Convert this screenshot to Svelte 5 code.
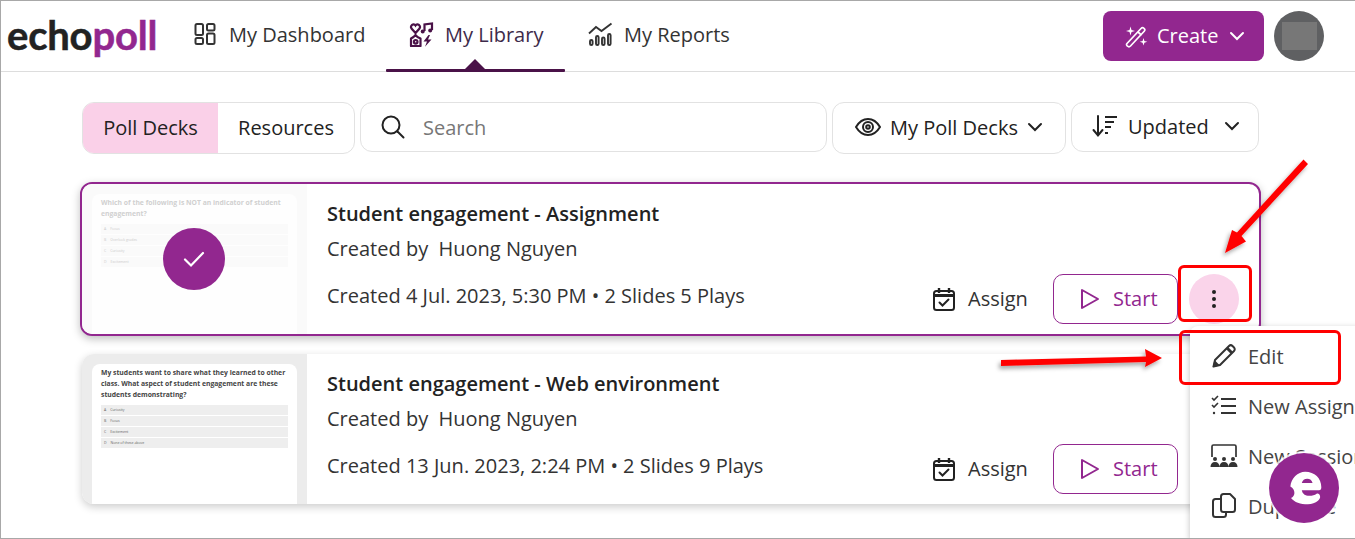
<script>
  const cards = [
    {
      title: "Student engagement - Assignment",
      meta: "Created 4 Jul. 2023, 5:30 PM • 2 Slides 5 Plays",
      question: "Which of the following is NOT an indicator of student engagement?",
      options: ["Focus", "Overlook grades", "Curiosity", "Excitement"],
      selected: true
    },
    {
      title: "Student engagement - Web environment",
      meta: "Created 13 Jun. 2023, 2:24 PM • 2 Slides 9 Plays",
      question: "My students want to share what they learned to other class. What aspect of student engagement are these students demonstrating?",
      options: ["Curiosity", "Focus", "Excitement", "None of these above"],
      selected: false
    }
  ];
  const letters = ["A", "B", "C", "D"];
</script>

<div class="frame">
  <header class="topbar">
    <div class="logo"><span>echo</span><span class="poll">poll</span></div>
    <nav class="nav">
      <a class="nav-item dash">
        <svg width="24" height="24" viewBox="0 0 24 24" fill="none" stroke="currentColor" stroke-width="2"><rect x="2.5" y="2" width="7.5" height="11" rx="1.5"/><rect x="14" y="2" width="7.5" height="6.5" rx="1.5"/><rect x="2.5" y="16" width="7.5" height="6" rx="1.5"/><rect x="14" y="11.5" width="7.5" height="10.5" rx="1.5"/></svg>
        My Dashboard
      </a>
      <a class="nav-item lib active">
        <svg width="25" height="25" viewBox="0 0 25 25" fill="none" stroke="#4a1248" stroke-width="2.2"><path d="M6.500 11 2.500 6.500C.8 4 4.500 .5 6.500 3.500 8.500 .5 12.200 4 10.500 6.500z"/><path d="M15.500 9V2.500l7.500-1V8"/><circle cx="13.700" cy="9.500" r="2" fill="#4a1248" stroke="none"/><circle cx="21.200" cy="8.500" r="2" fill="#4a1248" stroke="none"/><path d="M2 16.500 4.500 15l2-2 2 2 3 1.500V24H2z" stroke-linejoin="round"/><circle cx="6.700" cy="19.800" r="1.800"/><path d="M19.500 13 14.500 19.500h3.500L16 24.800 22.500 17.500H19l2-4.500z" fill="#4a1248" stroke="none"/></svg>
        My Library
        <span class="caret"></span>
      </a>
      <a class="nav-item rep">
        <svg width="25" height="24" viewBox="0 0 25 24" fill="none" stroke="currentColor" stroke-width="1.900"><path d="M1 11.500 8 5l5.500 4L23.500 1.500"/><rect x="2" y="18" width="2.600" height="5" rx="1.300"/><rect x="8" y="14" width="2.600" height="9" rx="1.300"/><rect x="14" y="15.500" width="2.600" height="7.500" rx="1.300"/><rect x="20" y="12" width="2.600" height="11" rx="1.300"/></svg>
        My Reports
      </a>
    </nav>
    <button class="create">
      <svg width="24" height="24" viewBox="0 0 24 24" fill="none" stroke="#fff" stroke-width="1.700"><path d="M3 19.500 17 4.500c1-1 2-1 3-.2s1 2 .2 3L6.500 22c-1 1-2 1-3 .2s-1.300-1.700-.5-2.700z"/><path d="m14 8 3.500 3.200"/><path d="M6.500 2.500 7.500 6 11 7 7.500 8 6.500 11.500 5.500 8 2 7 5.500 6z" fill="#fff" stroke="none"/><path d="M19.500 14l.9 2.900 2.900.9-2.900.9-.9 2.900-.9-2.900-2.900-.9 2.900-.9z" fill="#fff" stroke="none"/></svg>
      Create
      <svg class="chev" width="16" height="10" viewBox="0 0 16 10" fill="none" stroke="#fff" stroke-width="2" stroke-linecap="round"><path d="m2 2 6 6 6-6"/></svg>
    </button>
    <div class="avatar"><span></span></div>
  </header>

  <main class="content">
    <div class="toolbar">
      <div class="tabs">
        <span class="tab on">Poll Decks</span>
        <span class="tab">Resources</span>
      </div>
      <div class="search">
        <svg width="26" height="26" viewBox="0 0 26 26" fill="none" stroke="#222" stroke-width="2"><circle cx="11" cy="11" r="8.500"/><path d="m17.500 17.500 6 6" stroke-linecap="round"/></svg>
        <span>Search</span>
      </div>
      <button class="filter decks">
        <svg width="26" height="20" viewBox="0 0 26 20" fill="none" stroke="#222" stroke-width="2"><path d="M1 10c3-5 7-8 12-8s9 3 12 8c-3 5-7 8-12 8S4 15 1 10z"/><circle cx="13" cy="10" r="5"/><circle cx="13" cy="10" r="1.800"/></svg>
        My Poll Decks
        <svg width="16" height="10" viewBox="0 0 16 10" fill="none" stroke="#222" stroke-width="2" stroke-linecap="round"><path d="m2 2 6 6 6-6"/></svg>
      </button>
      <button class="filter sort">
        <svg width="26" height="24" viewBox="0 0 26 24" fill="none" stroke="#222" stroke-width="2"><path d="M6 2v19M1.500 16 6 21.500 10.500 16" stroke-linecap="round"/><path d="M13 3h12M13 8h9M13 13h6M13 19h3"/></svg>
        Updated
        <svg width="16" height="10" viewBox="0 0 16 10" fill="none" stroke="#222" stroke-width="2" stroke-linecap="round"><path d="m2 2 6 6 6-6"/></svg>
      </button>
    </div>

    <div class="cards">
      {#each cards as card}
        <article class="card" class:selected={card.selected}>
          <div class="thumb">
            <div class="slide">
              <p class="q">{card.question}</p>
              {#each card.options as opt, i}
                <div class="opt"><b>{letters[i]}</b>{opt}</div>
              {/each}
            </div>
            {#if card.selected}
              <div class="check">
                <svg width="22" height="18" viewBox="0 0 22 18" fill="none" stroke="#fff" stroke-width="2.200" stroke-linecap="round"><path d="m2 9.500 6 6L20 3"/></svg>
              </div>
            {/if}
          </div>
          <div class="info">
            <h3>{card.title}</h3>
            <p class="by">Created by&nbsp; Huong Nguyen</p>
            <div class="bottom">
              <p class="meta">{card.meta}</p>
              <span class="assign">
                <svg width="22" height="24" viewBox="0 0 22 24" fill="none" stroke="#222" stroke-width="2"><rect x="1" y="4" width="20" height="19" rx="2.500"/><path d="M1 8.500h20" stroke-width="3"/><path d="M6 1v5M16 1v5" stroke-width="2.400"/><path d="m6.500 15.500 3 3 6-6" stroke-linecap="round"/></svg>
                Assign
              </span>
              <button class="start">
                <svg width="20" height="22" viewBox="0 0 20 22" fill="none" stroke="#92278f" stroke-width="2" stroke-linejoin="round"><path d="M2 2v18l16-9z"/></svg>
                Start
              </button>
              {#if card.selected}
                <span class="more"><i></i><i></i><i></i></span>
              {/if}
            </div>
          </div>
        </article>
      {/each}
    </div>
  </main>

  <div class="menu">
    <div class="menu-item">
      <svg width="26" height="26" viewBox="0 0 26 26" fill="none" stroke="#333" stroke-width="2"><path d="M2.500 23.500 4 17 18 3c1-1 2.500-1 3.500 0l1.500 1.500c1 1 1 2.500 0 3.500L9 22z" stroke-linejoin="round"/><path d="M16 5l5 5" stroke-width="3"/><path d="M3 23l1-4 3 3z" fill="#333"/></svg>
      Edit
    </div>
    <div class="menu-item">
      <svg width="26" height="22" viewBox="0 0 26 22" fill="none" stroke="#333" stroke-width="2"><path d="m1 3 2 2 4-4M1 10l2 2 4-4" stroke-width="1.600"/><path d="M10 4h15M10 11h15M10 18h15"/><circle cx="3" cy="18" r="1.200" fill="#333" stroke="none"/></svg>
      New Assignment
    </div>
    <div class="menu-item">
      <svg width="28" height="24" viewBox="0 0 28 24" fill="none" stroke="#333" stroke-width="1.700"><path d="M2 13V2.500C2 1.500 2.500 1 3.500 1h21c1 0 1.500.5 1.500 1.500V13"/><g fill="#333" stroke="none"><circle cx="5" cy="15" r="2"/><circle cx="14" cy="15" r="2"/><circle cx="23" cy="15" r="2"/><path d="M.5 23c0-3 1.500-5 4.500-5s4.500 2 4.500 5zM9.500 23c0-3 1.500-5 4.500-5s4.500 2 4.500 5zM18.500 23c0-3 1.500-5 4.500-5s4.500 2 4.500 5z"/></g></svg>
      New Session
    </div>
    <div class="menu-item">
      <svg width="26" height="26" viewBox="0 0 26 26" fill="none" stroke="#333" stroke-width="2"><path d="M10 6H4.500C3 6 2 7 2 8.500v13C2 23 3 24 4.500 24h8c1.500 0 2.500-1 2.500-2.500V19"/><path d="M10 3.500C10 2 11 1 12.500 1H19l5 5v10.500c0 1.500-1 2.500-2.500 2.500h-9C11 19 10 18 10 16.500z" stroke-linejoin="round"/></svg>
      Duplicate
    </div>
  </div>

  <div class="chat">
    <svg width="35" height="34" viewBox="0 0 52 48" preserveAspectRatio="none"><path d="M27 1c14 0 24 9 24 22 0 3-1 4-3.500 4H22c1 5 5 8 11 8 5 0 8-1 11-3 2-1 4 0 5 3 1 3-1 5-3 7-4 3-9 5-15 5-11 0-20-3-25-9 3-1 5-4 5-7 0-4-2-7-6-9C6 10 16 1 27 1zM22 17h16c-1-4-4-6-8-6s-7 2-8 6z" fill="#fff" fill-rule="evenodd"/></svg>
  </div>

  <div class="mark mark-more"></div>
  <div class="mark mark-edit"></div>
  <svg class="arrows" width="1355" height="539" viewBox="0 0 1355 539">
    <defs><filter id="soft" x="-20%" y="-20%" width="140%" height="140%"><feDropShadow dx="-2" dy="3" stdDeviation="2" flood-color="#000" flood-opacity=".35"/></filter></defs>
    <g fill="#f00" filter="url(#soft)">
      <path d="M1303.500 159.500 1308 164 1241.500 236 1246 241.500 1225 253 1232 230 1237 232.500z"/>
      <path d="M1001 360 1146 356.500 1145 349 1162 358 1145 367 1146 362 1001 366z"/>
    </g>
  </svg>
</div>

<style>
  :global(body) { margin: 0; background: #fff; font-family: "Open Sans", "Liberation Sans", sans-serif; }
  * { box-sizing: border-box; }
  .frame { position: relative; width: 1355px; height: 539px; overflow: hidden; background: #fff; color: #222; border-top: 1px solid #a8a8a8; border-left: 1px solid #a8a8a8; border-bottom: 1px solid #a8a8a8; }

  .topbar { display: flex; align-items: center; height: 71px; border-bottom: 1px solid #ddd; padding-left: 6px; }
  .logo { width: 150px; margin-top: -3px; font-family: "Lato", "Open Sans", sans-serif; font-size: 40px; font-weight: 700; letter-spacing: -0.200px; -webkit-text-stroke: .5px currentColor; color: #222; line-height: 1; }
  .poll { color: #92278f; }
  .nav { display: flex; height: 70px; }
  .nav-item { position: relative; display: flex; align-items: center; gap: 12px; font-size: 20px; color: #333; padding-bottom: 4px; }
  .nav-item.dash { margin-left: 36px; width: 193px; }
  .nav-item.lib { width: 179px; padding-left: 23px; gap: 11px; color: #3d2a4a; }
  .nav-item.rep { margin-left: 23px; gap: 11px; }
  .active::after { content: ""; position: absolute; left: 0; right: 0; bottom: -1px; height: 3px; background: #4a1248; border-radius: 1px; }
  .caret { position: absolute; left: 79px; bottom: 2px; width: 0; height: 0; border-left: 10px solid transparent; border-right: 10px solid transparent; border-bottom: 10px solid #4a1248; }
  .create { display: flex; align-items: center; gap: 9px; width: 161px; height: 50px; margin-left: auto; padding: 0 0 0 21px; border: 0; border-radius: 8px; background: #92278f; color: #fff; font: 500 20px "Open Sans", sans-serif; margin-top: -1px; }
  .chev { margin-left: 2px; }
  .avatar { display: flex; align-items: center; justify-content: center; width: 50px; height: 50px; margin: -1px 31px 0 10px; border-radius: 50%; background: #5f6062; }
  .avatar span { width: 35px; height: 28px; background: #777; }

  .content { padding: 30px 0 0 79px; }
  .toolbar { display: flex; align-items: flex-start; gap: 5px; padding-left: 2px; }
  .tabs { display: flex; width: 273px; height: 52px; border: 1px solid #e2e2e2; border-radius: 12px; overflow: hidden; }
  .tab { display: flex; align-items: center; justify-content: center; font-size: 20px; flex: 1; padding-bottom: 2px; }
  .tab.on { flex: 0 0 135px; background: #fad0e8; }
  .search { display: flex; align-items: center; gap: 17px; width: 467px; height: 50px; padding-left: 19px; border: 1px solid #e2e2e2; border-radius: 12px; font-size: 20px; color: #777; }
  .filter { display: flex; align-items: center; background: #fff; border: 1px solid #e2e2e2; border-radius: 12px; font: 400 20px "Open Sans", sans-serif; color: #222; }
  .decks { width: 234px; height: 52px; gap: 9px; padding: 0 0 2px 22px; }
  .sort { width: 188px; height: 50px; gap: 10px; padding: 0 0 2px 20px; }
  .sort svg:last-child { margin-left: 5px; }

  .cards { display: flex; flex-direction: column; gap: 18px; margin-top: 28px; }
  .card { display: flex; width: 1179px; height: 150px; margin-left: 2px; border-radius: 12px; overflow: hidden; background: #fff; box-shadow: 0 3px 8px rgba(0,0,0,.2); }
  .card.selected { width: 1181px; height: 154px; margin-left: 0; border: 2px solid #92278f; box-shadow: 0 3px 8px rgba(0,0,0,.25); }
  .thumb { position: relative; flex: 0 0 225px; padding: 10px 10px 0; background: #ececec; overflow: hidden; }
  .selected .thumb { background: #fafafa; }
  .slide { width: 205px; height: 150px; padding: 3px 9px; background: #fff; border-radius: 8px 8px 0 0; }
  .selected .slide { background: #fefefe; color: #ccc; }
  .q { margin: 0 0 5px; font-size: 6.800px; font-weight: 700; line-height: 11px; color: #444; }
  .selected .q { color: #d0d0d0; }
  .opt { display: flex; align-items: center; gap: 4px; height: 9.500px; margin-bottom: 1.500px; padding-left: 3px; background: #eee; font-size: 3.500px; color: #666; }
  .selected .opt { background: #fafafa; color: #ccc; }
  .opt b { font-weight: 400; }
  .check { position: absolute; left: 81px; top: 44px; display: flex; align-items: center; justify-content: center; width: 62px; height: 62px; border-radius: 50%; background: #92278f; }

  .info { flex: 1; min-width: 0; padding: 17px 0 0 20px; }
  h3 { margin: 0; font-size: 20px; font-weight: 600; line-height: 26px; color: #222; }
  .by { margin: 9px 0 0; font-size: 20px; line-height: 26px; color: #333; }
  .bottom { display: flex; align-items: center; height: 50px; margin-top: 12px; }
  .meta { width: 606px; margin: 0 0 8px; font-size: 20px; color: #333; white-space: nowrap; }
  .assign { display: flex; align-items: center; gap: 13px; width: 120px; padding-bottom: 1px; font-size: 20px; color: #333; }
  .start { display: flex; align-items: center; gap: 13px; width: 125px; height: 50px; padding: 0 0 1px 26px; background: #fff; border: 1px solid #92278f; border-radius: 10px; font: 400 20px "Open Sans", sans-serif; color: #92278f; }
  .more { display: flex; flex-direction: column; align-items: center; justify-content: center; gap: 3px; width: 50px; height: 50px; margin-left: 11px; border-radius: 50%; background: #fad4ea; }
  .more i { width: 4px; height: 4px; border-radius: 50%; background: #222; }

  .menu { position: absolute; left: 1189px; top: 325px; width: 200px; height: 213px; padding-top: 5px; background: #fff; box-shadow: 0 2px 6px rgba(0,0,0,.25); border-radius: 8px 0 0 0; }
  .menu-item { display: flex; align-items: center; gap: 10px; height: 50px; padding-left: 20px; font-size: 20px; color: #444; white-space: nowrap; }
  .menu-item svg { flex: 0 0 28px; }
  .chat { position: absolute; left: 1268px; top: 452px; display: flex; align-items: center; justify-content: center; width: 70px; height: 70px; border-radius: 50%; background: #92278f; box-shadow: 0 0 0 2px rgba(255,255,255,.8); }
  .mark { position: absolute; border: 3px solid #f00; border-radius: 6px; }
  .mark-more { left: 1177px; top: 264px; width: 74px; height: 57px; }
  .mark-edit { left: 1178px; top: 329px; width: 162px; height: 55px; }
  .arrows { position: absolute; left: -1px; top: -1px; pointer-events: none; }
</style>
